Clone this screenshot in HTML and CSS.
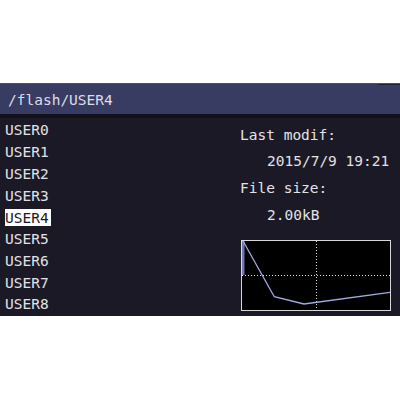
FILE: index.html
```html
<!DOCTYPE html>
<html>
<head>
<meta charset="utf-8">
<link rel="stylesheet" href="styles.css">
</head>
<body>
<div class="screen">
  <div class="header">/flash/USER4</div>
  <div class="divider"></div>
  <div class="content">
    <ul class="files">
      <li>USER0</li>
      <li>USER1</li>
      <li>USER2</li>
      <li>USER3</li>
      <li><span class="selected">USER4</span></li>
      <li>USER5</li>
      <li>USER6</li>
      <li>USER7</li>
      <li>USER8</li>
    </ul>
    <div class="info">
      <div class="line">Last modif:</div>
      <div class="line indent">2015/7/9 19:21</div>
      <div class="line">File size:</div>
      <div class="line indent">2.00kB</div>
      <svg class="preview" width="150" height="71" viewBox="0 0 150 71">
        <rect x="0" y="0" width="150" height="71" fill="#000000"/>
        <line x1="75.5" y1="1" x2="75.5" y2="70" stroke="#e0e0e0" stroke-width="1" stroke-dasharray="1 2"/>
        <line x1="1" y1="35.5" x2="149" y2="35.5" stroke="#e0e0e0" stroke-width="1" stroke-dasharray="1 2"/>
        <rect x="1" y="1" width="2.5" height="34" fill="#6f77b4"/>
        <polyline points="2,1 33.3,56.7 63,64 149,52.3" fill="none" stroke="#a3aae6" stroke-width="1.3"/>
        <rect x="0.5" y="0.5" width="149" height="70" fill="none" stroke="#d8d8d8" stroke-width="1"/>
      </svg>
    </div>
  </div>
</div>
</body>
</html>
```
FILE: styles.css
```css
html, body {
  margin: 0;
  padding: 0;
  background: #ffffff;
}
body {
  font-family: "DejaVu Sans Mono", "Liberation Mono", monospace;
  font-size: 14.5px;
  color: #e2e2e6;
}
.screen {
  margin-top: 83px;
  height: 233px;
  width: 400px;
  display: flex;
  flex-direction: column;
  background: #1b1926;
}
.header {
  position: relative;
  height: 31px;
  line-height: 32px;
  padding-left: 8px;
  background: #383c63;
  border-top: 1px solid #4a4f78;
  box-sizing: border-box;
  color: #dcdce6;
}
.header::after {
  content: "";
  position: absolute;
  top: 0;
  right: 0;
  width: 22px;
  height: 1px;
  background: #202236;
}
.divider {
  height: 4px;
  background: #121118;
}
.content {
  flex: 1;
  display: flex;
}
.files {
  list-style: none;
  margin: 0;
  padding: 2.4px 0 0 5px;
  width: 235px;
}
.files li {
  height: 21.75px;
  line-height: 21.75px;
  white-space: nowrap;
}
.selected {
  background: #ffffff;
  color: #1b1926;
  padding: 0.6px 2px 0.6px 0;
}
.info {
  padding-top: 3.9px;
  display: flex;
  flex-direction: column;
  align-items: flex-start;
}
.line {
  height: 26.7px;
  line-height: 26.7px;
  white-space: nowrap;
}
.indent {
  padding-left: 27px;
}
.preview {
  display: block;
  margin-top: 11.3px;
  margin-left: 1px;
}
```
